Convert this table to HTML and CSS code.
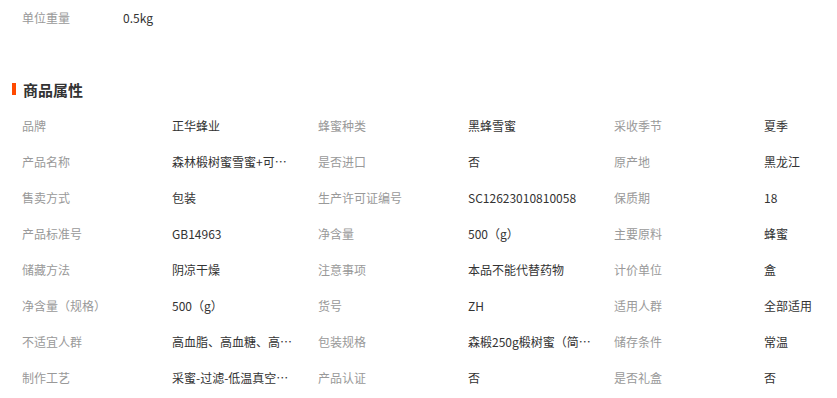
FILE: index.html
```html
<!DOCTYPE html>
<html lang="zh-CN">
<head>
<meta charset="utf-8">
<title>商品属性</title>
<link rel="stylesheet" href="styles.css">
</head>
<body>
<div class="page">
  <div class="spec-row">
    <span class="spec-label">单位重量</span>
    <span class="spec-value">0.5kg</span>
  </div>

  <h2 class="section-title"><span class="title-bar"></span>商品属性</h2>

  <div class="attr-grid">
    <span class="attr-label">品牌</span><span class="attr-value">正华蜂业</span>
    <span class="attr-label">蜂蜜种类</span><span class="attr-value">黑蜂雪蜜</span>
    <span class="attr-label">采收季节</span><span class="attr-value">夏季</span>

    <span class="attr-label">产品名称</span><span class="attr-value">森林椴树蜜雪蜜+可追溯蜂蜜</span>
    <span class="attr-label">是否进口</span><span class="attr-value">否</span>
    <span class="attr-label">原产地</span><span class="attr-value">黑龙江</span>

    <span class="attr-label">售卖方式</span><span class="attr-value">包装</span>
    <span class="attr-label">生产许可证编号</span><span class="attr-value">SC12623010810058</span>
    <span class="attr-label">保质期</span><span class="attr-value">18</span>

    <span class="attr-label">产品标准号</span><span class="attr-value">GB14963</span>
    <span class="attr-label">净含量</span><span class="attr-value">500（g）</span>
    <span class="attr-label">主要原料</span><span class="attr-value">蜂蜜</span>

    <span class="attr-label">储藏方法</span><span class="attr-value">阴凉干燥</span>
    <span class="attr-label">注意事项</span><span class="attr-value">本品不能代替药物</span>
    <span class="attr-label">计价单位</span><span class="attr-value">盒</span>

    <span class="attr-label">净含量（规格）</span><span class="attr-value">500（g）</span>
    <span class="attr-label">货号</span><span class="attr-value">ZH</span>
    <span class="attr-label">适用人群</span><span class="attr-value">全部适用</span>

    <span class="attr-label">不适宜人群</span><span class="attr-value">高血脂、高血糖、高血压人群</span>
    <span class="attr-label">包装规格</span><span class="attr-value">森椴250g椴树蜜（简装）</span>
    <span class="attr-label">储存条件</span><span class="attr-value">常温</span>

    <span class="attr-label">制作工艺</span><span class="attr-value">采蜜-过滤-低温真空浓缩</span>
    <span class="attr-label">产品认证</span><span class="attr-value">否</span>
    <span class="attr-label">是否礼盒</span><span class="attr-value">否</span>
  </div>
</div>
</body>
</html>
```

FILE: styles.css
```css
* {
  box-sizing: border-box;
}

html, body {
  margin: 0;
  padding: 0;
  background: #ffffff;
  overflow: hidden;
}

body {
  font-family: "Noto Sans CJK SC", "Liberation Sans", sans-serif;
  font-size: 12px;
  color: #333333;
}

.page {
  width: 837px;
}

.spec-row {
  display: flex;
  height: 36px;
  line-height: 36px;
  padding-left: 22px;
}

.spec-label {
  width: 101px;
  color: #999999;
}

.spec-value {
  color: #333333;
}

.section-title {
  display: flex;
  align-items: center;
  margin: 42px 0 0 0;
  padding-left: 12px;
  height: 22px;
  font-size: 15px;
  font-weight: bold;
  color: #333333;
}

.title-bar {
  width: 4px;
  height: 12px;
  background: #ff4a00;
  margin-right: 7px;
}

.attr-grid {
  display: grid;
  grid-template-columns: 150px 146px 150px 146px 150px minmax(0, 1fr);
  grid-auto-rows: 36px;
  margin-top: 8px;
  padding-left: 22px;
  line-height: 36px;
}

.attr-label {
  color: #999999;
  white-space: nowrap;
}

.attr-value {
  color: #333333;
  max-width: 124px;
  white-space: nowrap;
  overflow: hidden;
  text-overflow: ellipsis;
}
```
